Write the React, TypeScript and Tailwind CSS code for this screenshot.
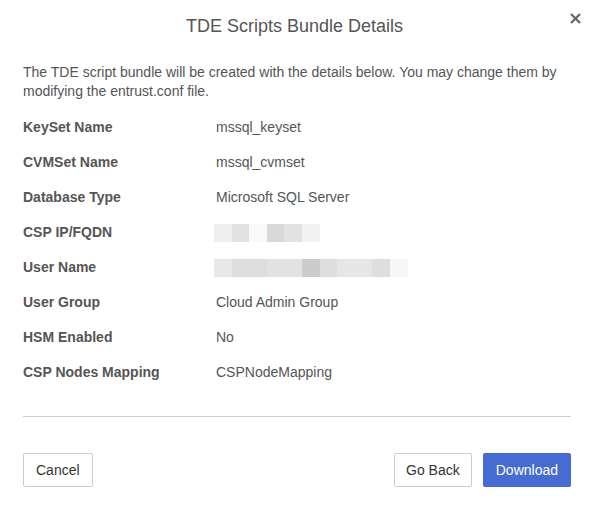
import React from 'react'

const rows: { label: string; value?: string; blocks?: string[] }[] = [
  { label: 'KeySet Name', value: 'mssql_keyset' },
  { label: 'CVMSet Name', value: 'mssql_cvmset' },
  { label: 'Database Type', value: 'Microsoft SQL Server' },
  { label: 'CSP IP/FQDN', blocks: ['#eeeeee', '#e2e2e2', '#fafafa', '#d9d9d9', '#e2e2e2', '#f2f2f2'] },
  {
    label: 'User Name',
    blocks: ['#e8e8e8', '#dedede', '#dedede', '#e2e2e2', '#e2e2e2', '#cbcbcb', '#dedede', '#e6e6e6', '#e6e6e6', '#dedede', '#f7f7f7'],
  },
  { label: 'User Group', value: 'Cloud Admin Group' },
  { label: 'HSM Enabled', value: 'No' },
  { label: 'CSP Nodes Mapping', value: 'CSPNodeMapping' },
]

export default function App() {
  return (
    <div className="w-[589px] h-[508px] bg-white text-[#555] font-['Liberation_Sans',Arial,sans-serif]">
      {/* Header */}
      <div className="relative h-[50px] flex items-center justify-center">
        <h2 className="text-[18px] text-[#555] mt-[2px]">TDE Scripts Bundle Details</h2>
        <button className="absolute right-[3px] top-[7px] w-[22px] h-[22px] flex items-center justify-center">
          <svg width="11" height="11" viewBox="0 0 11 11">
            <path d="M1 1 L10 10 M10 1 L1 10" stroke="#666" strokeWidth="2.3" />
          </svg>
        </button>
      </div>

      <div className="pl-[23px] pr-[18px]">
        <p className="text-[14px] leading-[19px] pt-[13px] pr-[5px]">
          The TDE script bundle will be created with the details below. You may change them by modifying the entrust.conf file.
        </p>

        <div className="mt-[9px] flex flex-col">
          {rows.map(r => (
            <div key={r.label} className="flex items-center h-[35px] text-[14px]">
              <div className="w-[193px] font-bold">{r.label}</div>
              {r.value ? (
                <div>{r.value}</div>
              ) : (
                <div className="flex h-[18px] -ml-[2px]">
                  {r.blocks!.map((c, i) => (
                    <div key={i} className="w-[17.6px] h-full" style={{ backgroundColor: c }} />
                  ))}
                </div>
              )}
            </div>
          ))}
        </div>

        <div className="mt-[26px] border-t border-[#cfcfcf]" />

        <div className="mt-[36px] flex items-center">
          <button className="h-[34px] px-[12px] border border-[#ccc] rounded-[2px] text-[14px] text-[#333]">Cancel</button>
          <div className="ml-auto flex gap-[11px]">
            <button className="h-[34px] px-[11px] border border-[#ccc] rounded-[2px] text-[14px] text-[#333]">Go Back</button>
            <button className="h-[34px] px-[13px] rounded-[2px] text-[14px] text-white bg-[#466cd4]">Download</button>
          </div>
        </div>
      </div>
    </div>
  )
}
